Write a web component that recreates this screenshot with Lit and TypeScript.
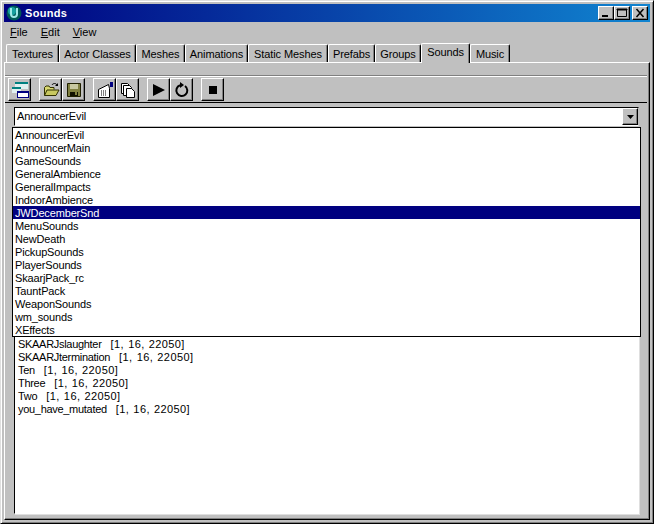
import { LitElement, css, html, svg } from 'lit'
import { customElement } from 'lit/decorators.js'

const TABS = [
  { label: 'Textures', width: 53 },
  { label: 'Actor Classes', width: 77 },
  { label: 'Meshes', width: 49 },
  { label: 'Animations', width: 63 },
  { label: 'Static Meshes', width: 80 },
  { label: 'Prefabs', width: 47 },
  { label: 'Groups', width: 46 },
  { label: 'Sounds', width: 49, active: true },
  { label: 'Music', width: 40 },
]

const PACKAGES = [
  'AnnouncerEvil',
  'AnnouncerMain',
  'GameSounds',
  'GeneralAmbience',
  'GeneralImpacts',
  'IndoorAmbience',
  'JWDecemberSnd',
  'MenuSounds',
  'NewDeath',
  'PickupSounds',
  'PlayerSounds',
  'SkaarjPack_rc',
  'TauntPack',
  'WeaponSounds',
  'wm_sounds',
  'XEffects',
]

const SOUNDS = ['SKAARJslaughter', 'SKAARJtermination', 'Ten', 'Three', 'Two', 'you_have_mutated']

const ICONS = {
  browser: svg`
    <rect x="4" y="1" width="13" height="7" fill="#e0f0f0"/>
    <rect x="4" y="1" width="13" height="2" fill="#008080"/>
    <rect x="1" y="6" width="9" height="6" fill="#e0f0f0"/>
    <rect x="1" y="6" width="9" height="2" fill="#008080"/>
    <rect x="6.500" y="10.500" width="11" height="6" fill="#fff" stroke="#000080"/>
    <rect x="6" y="10" width="12" height="2" fill="#000080"/>`,
  open: svg`
    <path d="M2.500 14.500V6.500L4 5h3l1 1.500h4v2" fill="#d8d870" stroke="#303000"/>
    <path d="M2.500 14.500L5 9h12l-3 5.500z" fill="#c8c860" stroke="#303000"/>
    <path d="M10 4c1-2 4-2 5 0" fill="none" stroke="#000"/>
    <path d="M16 2v3h-3z" fill="#000"/>`,
  save: svg`
    <path d="M2.500 2.500h13v13h-13z" fill="#808040" stroke="#202000"/>
    <rect x="5" y="3" width="8" height="5" fill="#c8c8a0"/>
    <rect x="5" y="11" width="8" height="4" fill="#101000"/>
    <rect x="10" y="11" width="2" height="3" fill="#808040"/>`,
  props: svg`
    <path d="M2.500 16.500V8.500L12.500 3.500L13.500 7.500V16.500z" fill="#fff" stroke="#000"/>
    <path d="M5 10h6M5 12h6M5 14h6" stroke="#000" stroke-dasharray="1 1"/>
    <path d="M14 1h3v5h-3z" fill="#000080"/>`,
  copy: svg`
    <path d="M2.500 2.500h6l2 2v8h-8z" fill="#fff" stroke="#000"/>
    <path d="M4.500 4.500h6l2 2v8h-8z" fill="#fff" stroke="#000"/>
    <path d="M7.500 7.500h5l3 3v6h-8z" fill="#fff" stroke="#000"/>`,
  play: svg`<path d="M3 3l12 6-12 6z" fill="#000"/>`,
  loop: svg`
    <path d="M12 5a5.500 5.500 0 1 1-5-.7" fill="none" stroke="#000" stroke-width="2"/>
    <path d="M7 1l4 3-4 3z" fill="#000"/>`,
  stop: svg`<rect x="5" y="5" width="8" height="8" fill="#000"/>`,
}

@customElement('app-root')
export class AppRoot extends LitElement {
  private tool(icon: keyof typeof ICONS) {
    return html`<button class="tool"><svg width="18" height="18" viewBox="0 0 18 18">${ICONS[icon]}</svg></button>`
  }

  protected render() {
    return html`
      <div class="window">
        <div class="titlebar">
          <svg class="logo" width="16" height="16" viewBox="0 0 16 16">
            <circle cx="8" cy="8" r="7.500" fill="#005858"/>
            <circle cx="6" cy="6" r="4" fill="#18a0a0"/>
            <path d="M5 3v6q0 3 3 3t3-3V3" fill="none" stroke="#a0e8e8" stroke-width="2"/>
          </svg>
          <span class="title">Sounds</span>
          <div class="caption-buttons">
            <button class="cap"><svg width="12" height="10" viewBox="0 0 12 10"><rect x="2" y="7" width="6" height="2"/></svg></button>
            <button class="cap"><svg width="12" height="10" viewBox="0 0 12 10"><path d="M1.500 1.500h9v7h-9zM1 1h10v1H1z" fill="none" stroke="#000"/></svg></button>
            <button class="cap close"><svg width="12" height="10" viewBox="0 0 12 10"><path d="M2.500 1l7 8M9.500 1l-7 8" stroke="#000" stroke-width="1.500"/></svg></button>
          </div>
        </div>
        <div class="menu">
          <span><u>F</u>ile</span>
          <span><u>E</u>dit</span>
          <span><u>V</u>iew</span>
        </div>
        <div class="tabs">
          ${TABS.map(
            t => html`<div class="tab ${t.active ? 'active' : ''}" style="width:${t.width}px">${t.label}</div>`
          )}
        </div>
        <div class="page">
          <div class="toolbar">
            <div class="tools">
              <div class="group">${this.tool('browser')}</div>
              <div class="group">${this.tool('open')}${this.tool('save')}</div>
              <div class="group">${this.tool('props')}${this.tool('copy')}</div>
              <div class="group">${this.tool('play')}${this.tool('loop')}</div>
              <div class="group">${this.tool('stop')}</div>
            </div>
          </div>
          <div class="content">
            <div class="combo">
              <span class="combo-value">AnnouncerEvil</span>
              <button class="arrow"><svg width="7" height="4" viewBox="0 0 7 4"><path d="M0 0h7L3.500 4z"/></svg></button>
            </div>
            <div class="list">
              ${SOUNDS.map(s => html`<div class="sound"><span class="name">${s}</span><span class="format">[1, 16, 22050]</span></div>`)}
            </div>
            <div class="dropdown">
              ${PACKAGES.map(p => html`<div class="option ${p === 'JWDecemberSnd' ? 'selected' : ''}">${p}</div>`)}
            </div>
          </div>
        </div>
      </div>
    `
  }

  static styles = css`
    :host {
      display: block;
      width: 654px;
      height: 524px;
      font: 11px / 13px 'Liberation Sans', Arial, sans-serif;
      color: #000;
    }
    .window {
      box-sizing: border-box;
      width: 654px;
      height: 524px;
      display: flex;
      flex-direction: column;
      padding: 3px;
      background: #c0c0c0;
      border-top: 1px solid #dfdfdf;
      border-left: 1px solid #dfdfdf;
      border-right: 1px solid #000;
      border-bottom: 1px solid #000;
      box-shadow: inset 1px 1px 0 #fff, inset -1px -1px 0 #808080;
    }
    .titlebar {
      height: 18px;
      flex: none;
      display: flex;
      align-items: center;
      padding: 0 2px 0 2px;
      background: linear-gradient(90deg, #000080, #1084d0);
      color: #fff;
    }
    .logo {
      flex: none;
    }
    .title {
      margin-left: 3px;
      font-weight: bold;
      letter-spacing: 0.3px;
    }
    .caption-buttons {
      margin-left: auto;
      display: flex;
    }
    button {
      padding: 0;
      margin: 0;
      font: inherit;
    }
    .cap {
      box-sizing: border-box;
      width: 16px;
      height: 14px;
      display: flex;
      align-items: center;
      justify-content: center;
      background: #c0c0c0;
      border: 1px solid;
      border-color: #fff #000 #000 #fff;
      box-shadow: inset -1px -1px 0 #808080;
    }
    .cap.close {
      margin-left: 2px;
    }
    .menu {
      height: 18px;
      flex: none;
      display: flex;
      align-items: center;
      gap: 13px;
      padding: 2px 0 0 6px;
      box-sizing: border-box;
    }
    .tabs {
      flex: none;
      height: 22px;
      display: flex;
      align-items: flex-end;
      padding-left: 2px;
      letter-spacing: -0.1px;
    }
    .tab {
      box-sizing: border-box;
      height: 18px;
      text-align: center;
      line-height: 18px;
      background: #c0c0c0;
      border-top: 1px solid #fff;
      border-left: 1px solid #fff;
      border-right: 1px solid #000;
      border-radius: 2px 2px 0 0;
      box-shadow: inset -1px 0 0 #808080;
    }
    .tab.active {
      height: 20px;
      line-height: 17px;
      margin-bottom: -1px;
      position: relative;
      z-index: 1;
    }
    .page {
      flex: 1;
      min-height: 0;
      display: flex;
      flex-direction: column;
      box-sizing: border-box;
      border-top: 1px solid #fff;
      border-left: 1px solid #fff;
      border-right: 1px solid #000;
      border-bottom: 1px solid #000;
      box-shadow: inset -1px -1px 0 #808080;
    }
    .toolbar {
      flex: none;
      margin: 12px 2px 0 0;
      border-top: 1px solid #808080;
      box-shadow: inset 0 1px 0 #fff;
      padding: 2px 0 1px 3px;
      border-bottom: 1px solid #000;
    }
    .tools {
      display: flex;
      gap: 8px;
    }
    .group {
      display: flex;
    }
    .tool {
      box-sizing: border-box;
      width: 23px;
      height: 23px;
      display: flex;
      align-items: center;
      justify-content: center;
      background: #c0c0c0;
      border: 1px solid;
      border-color: #fff #000 #000 #fff;
      box-shadow: inset -1px -1px 0 #808080;
    }
    .content {
      flex: 1;
      min-height: 0;
      position: relative;
      display: flex;
      flex-direction: column;
      gap: 1px;
      padding: 4px 10px 5px 9px;
      letter-spacing: -0.15px;
    }
    .combo {
      flex: none;
      box-sizing: border-box;
      height: 19px;
      display: flex;
      align-items: center;
      justify-content: space-between;
      background: #fff;
      border: 1px solid #000;
      border-right-color: #c0c0c0;
      border-bottom-color: #fff;
      padding-left: 2px;
    }
    .combo-value {
      line-height: 15px;
    }
    .arrow {
      box-sizing: border-box;
      width: 16px;
      height: 17px;
      display: flex;
      align-items: center;
      justify-content: center;
      background: #c0c0c0;
      border: 1px solid;
      border-color: #fff #000 #000 #fff;
      box-shadow: inset -1px -1px 0 #808080;
    }
    .list {
      flex: 1;
      min-height: 0;
      box-sizing: border-box;
      background: #fff;
      border: 1px solid;
      border-color: #000 #fff #fff #000;
      box-shadow: 1px 1px 0 #dfdfdf;
      padding: 210px 0 0 3px;
    }
    .sound {
      display: flex;
      gap: 9px;
    }
    .name {
      letter-spacing: -0.3px;
    }
    .format {
      word-spacing: 0.7px;
      letter-spacing: 0.4px;
    }
    .dropdown {
      position: absolute;
      top: 24px;
      left: 7px;
      right: 8px;
      box-sizing: border-box;
      background: #fff;
      border: 1px solid #000;
    }
    .option {
      height: 13px;
      line-height: 15px;
      padding-left: 2px;
    }
    .option.selected {
      background: #000080;
      color: #fff;
    }
  `
}

declare global {
  interface HTMLElementTagNameMap {
    'app-root': AppRoot
  }
}
